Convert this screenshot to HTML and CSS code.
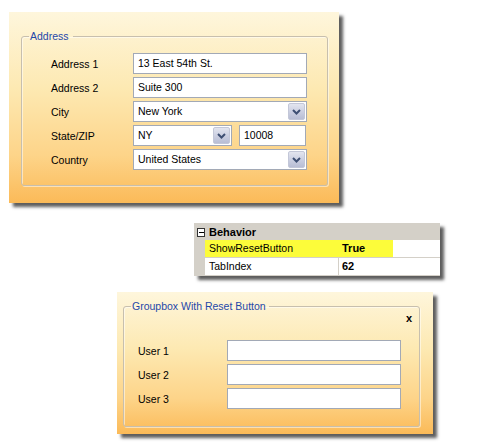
FILE: index.html
```html
<!DOCTYPE html>
<html>
<head>
<meta charset="utf-8">
<link rel="stylesheet" href="styles.css">
</head>
<body>
<div class="canvas">
  <div class="panel panel-address">
    <fieldset class="group">
      <legend>Address</legend>
      <div class="form">
        <div class="row"><span class="lbl">Address 1</span><div class="field w-full">13 East 54th St.</div></div>
        <div class="row"><span class="lbl">Address 2</span><div class="field w-full">Suite 300</div></div>
        <div class="row"><span class="lbl">City</span><div class="field combo w-full"><span class="val">New York</span><span class="drop"><svg width="9" height="6" viewBox="0 0 9 6"><path d="M1 1 L4.5 4.5 L8 1" fill="none" stroke="#3e4f73" stroke-width="2"/></svg></span></div></div>
        <div class="row"><span class="lbl">State/ZIP</span><div class="field combo w-state"><span class="val">NY</span><span class="drop"><svg width="9" height="6" viewBox="0 0 9 6"><path d="M1 1 L4.5 4.5 L8 1" fill="none" stroke="#3e4f73" stroke-width="2"/></svg></span></div><div class="field w-zip">10008</div></div>
        <div class="row"><span class="lbl">Country</span><div class="field combo w-full"><span class="val">United States</span><span class="drop"><svg width="9" height="6" viewBox="0 0 9 6"><path d="M1 1 L4.5 4.5 L8 1" fill="none" stroke="#3e4f73" stroke-width="2"/></svg></span></div></div>
      </div>
    </fieldset>
  </div>

  <div class="propgrid">
    <div class="pg-head">
      <span class="pg-strip"><span class="minus"></span></span>
      <span class="pg-cat">Behavior</span>
    </div>
    <div class="pg-row">
      <span class="pg-strip"></span>
      <span class="pg-name hl">ShowResetButton</span>
      <span class="pg-val hl-part">True</span>
    </div>
    <div class="pg-row">
      <span class="pg-strip"></span>
      <span class="pg-name">TabIndex</span>
      <span class="pg-val">62</span>
    </div>
  </div>

  <div class="panel panel-reset">
    <fieldset class="group group-reset">
      <legend>Groupbox With Reset Button</legend>
      <div class="close-row"><span class="close">x</span></div>
      <div class="form form-reset">
        <div class="row"><span class="lbl lbl-user">User 1</span><div class="field w-user"></div></div>
        <div class="row"><span class="lbl lbl-user">User 2</span><div class="field w-user"></div></div>
        <div class="row"><span class="lbl lbl-user">User 3</span><div class="field w-user"></div></div>
      </div>
    </fieldset>
  </div>
</div>
</body>
</html>
```

FILE: styles.css
```css
html, body {
  margin: 0;
  padding: 0;
  background: #ffffff;
}

body {
  font-family: "Liberation Sans", Arial, sans-serif;
  font-size: 10.5px;
  color: #000;
}

.canvas {
  width: 500px;
  height: 446px;
  overflow: hidden;
  display: flex;
  flex-direction: column;
  align-items: flex-start;
}

.panel {
  box-sizing: border-box;
  background: linear-gradient(to bottom, #fef6dc 0%, #fde9b2 40%, #fdd489 75%, #fbba58 100%);
  box-shadow: 4px 4px 3px rgba(40, 40, 40, 0.75);
}

.panel-address {
  margin: 12px 0 0 9px;
  width: 330px;
  height: 191px;
  padding: 18px 11px 0 12px;
}

.group {
  margin: 0;
  padding: 0;
  border: 1px solid #c7bfae;
  border-radius: 3px;
  min-width: 0;
  box-shadow: inset 1px 1px 0 rgba(255, 255, 255, 0.5), 1px 1px 0 rgba(255, 255, 255, 0.5);
}

.group legend {
  margin-left: 7px;
  padding: 0 4px 0 1px;
  color: #1f48a8;
  line-height: 13px;
  font-size: 10.5px;
}

.form {
  padding: 10px 0 15px 29px;
  display: flex;
  flex-direction: column;
  gap: 3px;
}

.row {
  display: flex;
  align-items: center;
  height: 21px;
}

.lbl {
  width: 82px;
  flex: none;
}

.field {
  box-sizing: border-box;
  height: 21px;
  background: #fff;
  border: 1px solid #a2a9b6;
  padding: 0 4px;
  line-height: 19px;
  display: flex;
  align-items: center;
  white-space: nowrap;
}

.combo {
  justify-content: space-between;
  padding-right: 1px;
}

.drop {
  box-sizing: border-box;
  width: 17px;
  height: 17px;
  border: 1px solid #c3c7d8;
  border-radius: 2px;
  background: linear-gradient(to bottom, #e3e5ef 0%, #ccd0e2 50%, #b8bdd4 100%);
  display: flex;
  align-items: center;
  justify-content: center;
}

.w-full { width: 174px; }
.w-state { width: 99px; }
.w-zip { width: 67px; margin-left: 7px; }

/* property grid */
.propgrid {
  margin: 20px 0 0 194px;
  width: 246px;
  background: #fff;
  border-top: 1px solid #d4d0c8;
  box-shadow: 4px 4px 3px rgba(40, 40, 40, 0.75);
  display: flex;
  flex-direction: column;
}

.pg-head {
  display: flex;
  align-items: center;
  height: 16px;
  background: #d4d0c8;
}

.pg-strip {
  width: 11px;
  flex: none;
  align-self: stretch;
  background: #d4d0c8;
  display: flex;
  align-items: center;
  justify-content: center;
}

.minus {
  box-sizing: border-box;
  width: 9px;
  height: 9px;
  border: 1px solid #333;
  background: #fff;
  margin-left: 3px;
  background-image: linear-gradient(#000, #000);
  background-size: 5px 1px;
  background-position: center;
  background-repeat: no-repeat;
}

.pg-cat {
  font-weight: bold;
  font-size: 11px;
  padding-left: 4px;
}

.pg-row {
  display: flex;
  height: 17px;
  border-bottom: 1px solid #d4d0c8;
}

.pg-name {
  width: 134px;
  box-sizing: border-box;
  padding-left: 4px;
  line-height: 17px;
  border-right: 1px solid #d4d0c8;
}

.pg-val {
  flex: 1;
  padding-left: 3px;
  line-height: 17px;
  font-weight: bold;
  font-size: 11px;
}

.hl {
  background: #fcfc3a;
  border-right-color: #fcfc3a;
}

.hl-part {
  background: linear-gradient(to right, #fcfc3a 0, #fcfc3a 54px, #fff 54px);
}

/* reset groupbox */
.panel-reset {
  margin: 16px 0 0 117px;
  width: 316px;
  height: 142px;
  padding: 8px 13px 0 6px;
}

.group-reset legend {
  margin-left: 7px;
  padding: 0 3px 0 1px;
}

.close-row {
  display: flex;
  justify-content: flex-end;
  height: 12px;
  padding-right: 7px;
}

.close {
  font-weight: bold;
  font-size: 11px;
  line-height: 10px;
}

.form-reset {
  padding: 15px 0 17px 14px;
}

.lbl-user {
  width: 89px;
}

.w-user {
  width: 174px;
}
```
